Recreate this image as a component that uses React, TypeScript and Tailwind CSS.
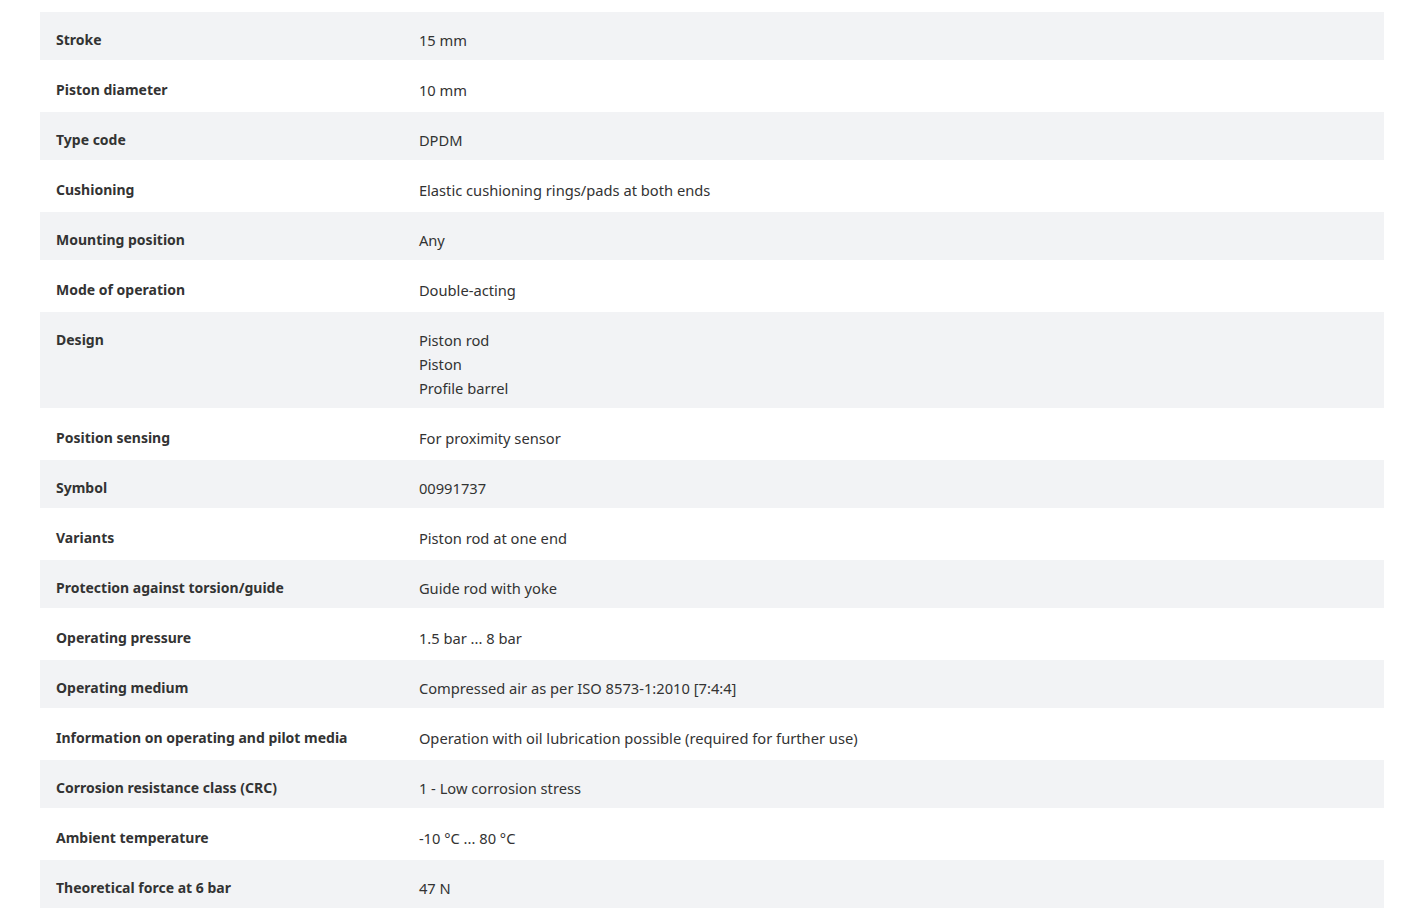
const specs: { label: string; value: string[] }[] = [
  { label: 'Stroke', value: ['15 mm'] },
  { label: 'Piston diameter', value: ['10 mm'] },
  { label: 'Type code', value: ['DPDM'] },
  { label: 'Cushioning', value: ['Elastic cushioning rings/pads at both ends'] },
  { label: 'Mounting position', value: ['Any'] },
  { label: 'Mode of operation', value: ['Double-acting'] },
  { label: 'Design', value: ['Piston rod', 'Piston', 'Profile barrel'] },
  { label: 'Position sensing', value: ['For proximity sensor'] },
  { label: 'Symbol', value: ['00991737'] },
  { label: 'Variants', value: ['Piston rod at one end'] },
  { label: 'Protection against torsion/guide', value: ['Guide rod with yoke'] },
  { label: 'Operating pressure', value: ['1.5 bar ... 8 bar'] },
  { label: 'Operating medium', value: ['Compressed air as per ISO 8573-1:2010 [7:4:4]'] },
  {
    label: 'Information on operating and pilot media',
    value: ['Operation with oil lubrication possible (required for further use)'],
  },
  { label: 'Corrosion resistance class (CRC)', value: ['1 - Low corrosion stress'] },
  { label: 'Ambient temperature', value: ['-10 °C ... 80 °C'] },
  { label: 'Theoretical force at 6 bar', value: ['47 N'] },
];

export default function App() {
  return (
    <div className="min-h-screen bg-white pt-3 font-['Noto_Sans',Arial,sans-serif] leading-6 text-[#333]">
      <div className="ml-10 flex w-[1344px] flex-col gap-[2px]">
        {specs.map((row, index) => (
          <div
            key={row.label}
            className={`flex pt-[16px] pb-[8px] ${index % 2 === 0 ? 'bg-[#f2f3f5]' : 'bg-white'}`}
          >
            <div className="w-[27%] shrink-0 px-4 text-[14px] font-bold">{row.label}</div>
            <div className="flex-1 px-4 text-[14.7px]">
              {row.value.map((line) => (
                <div key={line}>{line}</div>
              ))}
            </div>
          </div>
        ))}
      </div>
    </div>
  );
}
